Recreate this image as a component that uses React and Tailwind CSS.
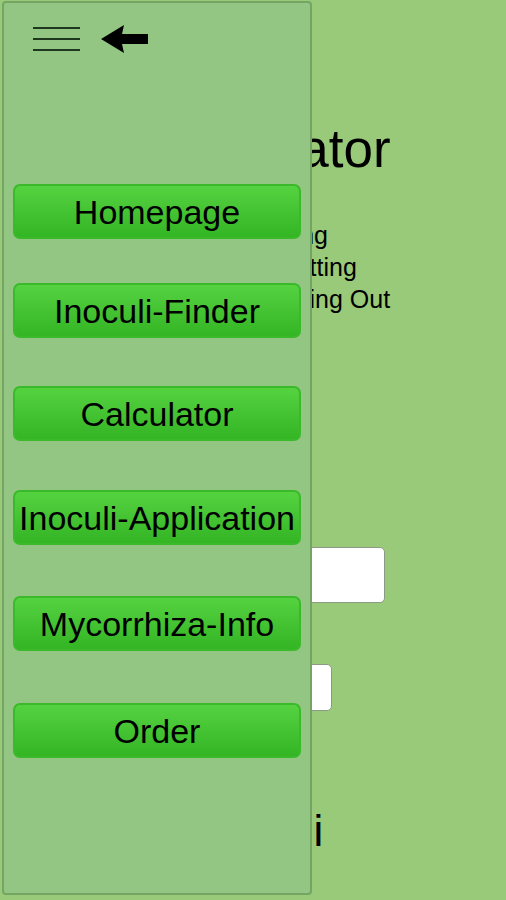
const menuItems = [
  { label: "Homepage", top: "mt-[0px]" },
  { label: "Inoculi-Finder", top: "mt-[44px]" },
  { label: "Calculator", top: "mt-[48px]" },
  { label: "Inoculi-Application", top: "mt-[49px]" },
  { label: "Mycorrhiza-Info", top: "mt-[51px]" },
  { label: "Order", top: "mt-[52px]" },
];

const App = () => {
  return (
    <div
      className="relative w-[506px] h-[900px] overflow-hidden bg-[#98ca7a] text-black"
      style={{ fontFamily: "'Liberation Sans', Arial, sans-serif" }}
    >
      {/* Page behind the drawer */}
      <div className="flex flex-col pt-[116px]">
        <h1 className="pl-[152px] text-[53px] leading-[66px] font-normal">Calculator</h1>
        <ul className="mt-[37px] text-[25px] leading-[32px]">
          <li className="pl-[246px]">Sowing</li>
          <li className="pl-[279px]">Potting</li>
          <li className="pl-[254px]">Pricking Out</li>
        </ul>
        <div className="mt-[232px] ml-[266px] w-[119px] h-[56px] bg-white rounded-[5px] border border-[#8a9a84]"></div>
        <div className="mt-[61px] ml-[266px] w-[66px] h-[47px] bg-white rounded-[5px] border border-[#8a9a84]"></div>
        <div className="mt-[94px] pl-[196px] text-[44px] leading-[52px]">Inoculi</div>
      </div>

      {/* Drawer overlay */}
      <div className="absolute left-[2px] top-[1px] w-[310px] h-[894px] bg-[#92c682] border-2 border-[#74a563] rounded-[4px] flex flex-col">
        <div className="flex items-center h-[74px] pl-[29px] pb-[2px]">
          <div className="flex flex-col gap-[8.5px] w-[47px]">
            <span className="block h-[2.5px] bg-[#1f361f]"></span>
            <span className="block h-[2.5px] bg-[#1f361f]"></span>
            <span className="block h-[2.5px] bg-[#1f361f]"></span>
          </div>
          <svg className="ml-[21px]" width="48" height="30" viewBox="0 0 48 30">
            <path d="M0 15 L23 1 L21 10 L47 10 L47 20 L21 20 L23 29 Z" fill="#000" />
          </svg>
        </div>
        <div className="flex flex-col px-[9px] mt-[107px]">
          {menuItems.map((item) => (
            <button
              key={item.label}
              className={`${item.top} h-[55px] w-[288px] rounded-[7px] border-2 border-[#3ab92a] bg-gradient-to-b from-[#55d240] to-[#33b524] text-[34px] leading-none text-black whitespace-nowrap flex items-center justify-center`}
            >
              {item.label}
            </button>
          ))}
        </div>
      </div>
    </div>
  );
};

export default App;
